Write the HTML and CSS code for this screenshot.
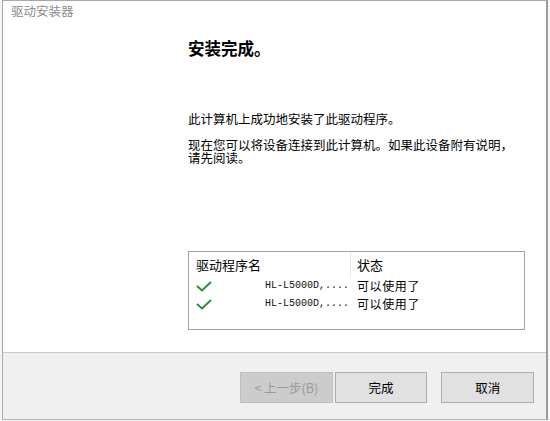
FILE: index.html
```html
<!DOCTYPE html>
<html lang="zh-CN">
<head>
<meta charset="utf-8">
<title>驱动安装器</title>
<link rel="stylesheet" href="styles.css">
</head>
<body>
<div class="window">
  <div class="main">
    <div class="title">驱动安装器</div>
    <div class="content">
      <h1 class="heading">安装完成。</h1>
      <p class="para first">此计算机上成功地安装了此驱动程序。</p>
      <p class="para second">现在您可以将设备连接到此计算机。如果此设备附有说明，请先阅读。</p>
      <div class="list">
        <div class="list-row list-head">
          <div class="cell name-cell head-cell">驱动程序名</div>
          <div class="cell status-cell">状态</div>
        </div>
        <div class="list-row item">
          <div class="cell name-cell">
            <svg class="check" width="16" height="11" viewBox="0 0 16 11"><polyline points="1,5 6,9.5 15,1" fill="none" stroke="#2f8c3f" stroke-width="2"/></svg>
            <span class="drv">HL-L5000D,....</span>
          </div>
          <div class="cell status-cell">可以使用了</div>
        </div>
        <div class="list-row item">
          <div class="cell name-cell">
            <svg class="check" width="16" height="11" viewBox="0 0 16 11"><polyline points="1,5 6,9.5 15,1" fill="none" stroke="#2f8c3f" stroke-width="2"/></svg>
            <span class="drv">HL-L5000D,....</span>
          </div>
          <div class="cell status-cell">可以使用了</div>
        </div>
      </div>
    </div>
  </div>
  <div class="footer">
    <button class="btn disabled">&lt; 上一步(B)</button>
    <button class="btn finish">完成</button>
    <button class="btn cancel">取消</button>
  </div>
</div>
</body>
</html>
```
FILE: styles.css
```css
html, body {
  margin: 0;
  padding: 0;
  background: #f5f5f5;
}
body {
  font-family: "Noto Sans CJK SC", "Noto Sans", sans-serif;
  font-size: 12.5px;
  color: #000;
}
.window {
  margin-left: 2px;
  width: 543px;
  height: 418px;
  border: 1px solid #a9a9a9;
  border-right: 2px solid #9c9c9c;
  border-bottom: 1px solid #b5b5b5;
  background: #fff;
  display: flex;
  flex-direction: column;
}
.main {
  height: 351px;
  background: #fff;
  border-bottom: 1px solid #c9c9c9;
}
.title {
  padding: 3px 0 0 8px;
  line-height: 14px;
  font-size: 12.5px;
  color: #8c8c8c;
}
.content {
  padding-left: 185px;
}
.heading {
  margin: 21px 0 0 0;
  font-size: 16.5px;
  line-height: 18px;
  font-weight: bold;
}
.para {
  margin: 0;
  line-height: 13px;
  width: 334px;
}
.para.first {
  margin-top: 55px;
}
.para.second {
  margin-top: 13px;
}
.list {
  margin-top: 87px;
  width: 335px;
  height: 77px;
  border: 1px solid #a3a3a3;
  font-size: 13px;
}
.list-row {
  display: grid;
  grid-template-columns: 162px 1fr;
}
.list-head {
  height: 25px;
}
.head-cell {
  border-right: 1px solid #e6e6e6;
}
.cell {
  box-sizing: border-box;
}
.list-head .cell {
  padding-top: 5px;
  line-height: 16px;
}
.name-cell {
  padding-left: 7px;
}
.status-cell {
  padding-left: 6px;
}
.item {
  height: 18px;
  line-height: 18px;
  font-size: 12px;
}
.item .status-cell {
  letter-spacing: 0.6px;
}
.item .name-cell {
  display: flex;
  align-items: center;
}
.check {
  flex: none;
  display: block;
}
.drv {
  margin-left: 53px;
  font-family: "Liberation Mono", monospace;
  font-size: 10px;
  color: #111;
}
.footer {
  flex: 1;
  background: #f0f0f0;
  display: flex;
  align-items: flex-start;
  padding: 19px 12px 0 237px;
}
.btn {
  width: 93px;
  height: 31px;
  margin: 0;
  padding: 0;
  font-family: "Noto Sans CJK SC", "Noto Sans", sans-serif;
  font-size: 12.5px;
  background: #e1e1e1;
  border: 1px solid #adadad;
  color: #000;
}
.btn.disabled {
  background: #cccccc;
  border-color: #bfbfbf;
  color: #9a9a9a;
}
.btn.finish {
  margin-left: 2px;
}
.btn.cancel {
  margin-left: 14px;
}
```
